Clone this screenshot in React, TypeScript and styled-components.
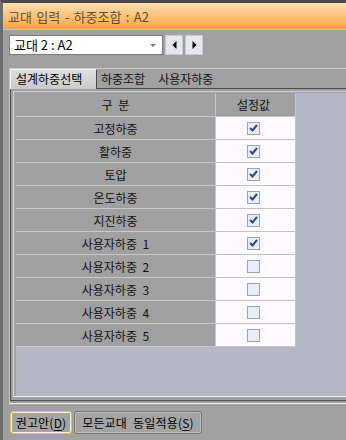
import styled, { createGlobalStyle } from "styled-components"

const GlobalStyle = createGlobalStyle`
  html, body {
    margin: 0;
    padding: 0;
    background: #a0a0a0;
  }
  body {
    font-family: "Noto Sans CJK KR", "Noto Sans", sans-serif;
    color: #111;
  }
  * {
    box-sizing: border-box;
  }
`

const Window = styled.div`
  width: 346px;
  height: 440px;
  overflow: hidden;
  background: #a0a0a0;
  border-top: 3px solid #4b4b4b;
  border-left: 3px solid #6c6c6c;
  display: flex;
  flex-direction: column;
`

const TitleBar = styled.div`
  height: 27px;
  flex: none;
  display: flex;
  align-items: center;
  padding-left: 5px;
  background: linear-gradient(#ffe0b4, #ffc57e 45%, #ffa440);
  border-bottom: 1px solid #c0c4cc;
  font-size: 13px;
  word-spacing: 1.5px;
  color: #5c4f42;
  white-space: nowrap;
`

const Body = styled.div`
  flex: 1;
  padding: 5px 0 0 6px;
  display: flex;
  flex-direction: column;
`

const Toolbar = styled.div`
  display: flex;
  gap: 2px;
  height: 20px;
`

const Combo = styled.div`
  width: 154px;
  height: 20px;
  background: #fff;
  border: 1px solid #7c7c7c;
  display: flex;
  align-items: center;
  justify-content: space-between;
  padding: 0 6px 0 4px;
  font-size: 13px;
  line-height: 18px;
  color: #000;
`

const ComboArrow = styled.span`
  width: 0;
  height: 0;
  border-left: 3px solid transparent;
  border-right: 3px solid transparent;
  border-top: 3px solid #8a7e72;
`

const NavButton = styled.div`
  width: 18px;
  height: 20px;
  background: #e5e7eb;
  border: 1px solid #c6cad2;
  display: flex;
  align-items: center;
  justify-content: center;
`

const Group = styled.div`
  margin-top: 13px;
  margin-right: -4px;
  border-top: 1px solid #c4c8d0;
  border-left: 1px solid #c6c6c6;
  border-bottom: 1px solid #fafafa;
  padding-bottom: 2px;
`

const TabStrip = styled.div`
  display: flex;
  height: 19px;
  align-items: flex-end;
`

const ActiveTab = styled.div`
  position: relative;
  z-index: 1;
  width: 87px;
  height: 20px;
  margin-bottom: -1px;
  padding-left: 5px;
  background: linear-gradient(#dedede, #cacaca);
  border-left: 1px solid #f4f4f4;
  border-top: 1px solid #f4f4f4;
  border-right: 1px solid #4a4a4a;
  font-size: 12px;
  line-height: 18px;
  color: #000;
  white-space: nowrap;
`

const Tab = styled.div`
  height: 19px;
  padding: 0 9px 0 4px;
  font-size: 12px;
  line-height: 19px;
  color: #111;
  white-space: nowrap;
`

const TabPage = styled.div`
  height: 313px;
  border-top: 1px solid #4e4e4e;
  border-left: 1px solid #4e4e4e;
  border-bottom: 1px solid #4e4e4e;
  padding: 2px 0 3px 2px;
  display: flex;
`

const Inset = styled.div`
  flex: 1;
  border-top: 1px solid #cdcdcd;
  border-left: 1px solid #d6d6d6;
  border-bottom: 1px solid #f2f2e6;
  padding-left: 1px;
  display: flex;
`

const Grid = styled.div`
  flex: 1;
  background: #b4b8c4;
  border-top: 1px solid #9aa2ba;
  border-left: 1px solid #9aa2ba;
  display: grid;
  grid-template-columns: 200px 80px;
  grid-auto-rows: 23px;
  grid-template-rows: 24px;
  align-content: start;
`

const LabelCell = styled.div`
  background: #a0a0a0;
  border-right: 1px solid #c6c6c6;
  border-bottom: 1px solid #c8c8c8;
  display: flex;
  align-items: center;
  justify-content: center;
  font-size: 12px;
  word-spacing: 3px;
  color: #111;
  white-space: nowrap;
`

const ValueCell = styled.div<{ $header?: boolean }>`
  background: ${(p) => (p.$header ? "#a0a0a0" : "#fdfbff")};
  border-right: 1px solid #c4c4c4;
  border-bottom: 1px solid #c4c4c4;
  display: flex;
  align-items: center;
  justify-content: center;
  padding-right: 4px;
  font-size: 12px;
  color: #111;
`

const Box = styled.div`
  width: 13px;
  height: 13px;
  border: 1px solid #9aa4b8;
  background: #e6eefa;
  display: flex;
  align-items: center;
  justify-content: center;
`

const Footer = styled.div`
  display: flex;
  gap: 2px;
  margin: 7px 0 0 1px;
`

const Button = styled.div<{ $focused?: boolean; $width: number }>`
  width: ${(p) => p.$width}px;
  height: 23px;
  border-radius: 3px;
  background: #a4a4a4;
  border: 1px solid ${(p) => (p.$focused ? "#e2c254" : "#777")};
  box-shadow: inset 0 0 0 1px ${(p) => (p.$focused ? "#fff6d0" : "#bcbcbc")};
  display: flex;
  align-items: center;
  justify-content: center;
  font-size: 12px;
  word-spacing: 3px;
  letter-spacing: 0.2px;
  color: #000;
  white-space: nowrap;

  u {
    text-underline-offset: 2px;
  }
`

const rows = [
  { name: "고정하중", on: true },
  { name: "활하중", on: true },
  { name: "토압", on: true },
  { name: "온도하중", on: true },
  { name: "지진하중", on: true },
  { name: "사용자하중 1", on: true },
  { name: "사용자하중 2", on: false },
  { name: "사용자하중 3", on: false },
  { name: "사용자하중 4", on: false },
  { name: "사용자하중 5", on: false },
]

function Check({ on }: { on: boolean }) {
  return (
    <Box>
      {on && (
        <svg width="9" height="8" viewBox="0 0 9 8">
          <path d="M1 4 L3.5 6.5 L8 1" fill="none" stroke="#2a4796" strokeWidth="2" />
        </svg>
      )}
    </Box>
  )
}

function Triangle({ left }: { left?: boolean }) {
  return (
    <svg width="5" height="8" viewBox="0 0 5 8">
      <path d={left ? "M4.5 0 L0.5 4 L4.5 8 Z" : "M0.5 0 L4.5 4 L0.5 8 Z"} fill="#000" />
    </svg>
  )
}

export default function App() {
  return (
    <Window>
      <GlobalStyle />
      <TitleBar>교대 입력 - 하중조합 : A2</TitleBar>
      <Body>
        <Toolbar>
          <Combo>
            <span>교대 2 : A2</span>
            <ComboArrow />
          </Combo>
          <NavButton>
            <Triangle left />
          </NavButton>
          <NavButton>
            <Triangle />
          </NavButton>
        </Toolbar>
        <Group>
          <TabStrip>
            <ActiveTab>설계하중선택</ActiveTab>
            <Tab>하중조합</Tab>
            <Tab>사용자하중</Tab>
          </TabStrip>
          <TabPage>
            <Inset>
              <Grid>
                <LabelCell>구 분</LabelCell>
                <ValueCell $header>설정값</ValueCell>
                {rows.map((r) => (
                  <>
                    <LabelCell key={r.name}>{r.name}</LabelCell>
                    <ValueCell key={r.name + "-v"}>
                      <Check on={r.on} />
                    </ValueCell>
                  </>
                ))}
              </Grid>
            </Inset>
          </TabPage>
        </Group>
        <Footer>
          <Button $focused $width={62}>
            권고안(<u>D</u>)
          </Button>
          <Button $width={128}>
            모든교대 동일적용(<u>S</u>)
          </Button>
        </Footer>
      </Body>
    </Window>
  )
}
